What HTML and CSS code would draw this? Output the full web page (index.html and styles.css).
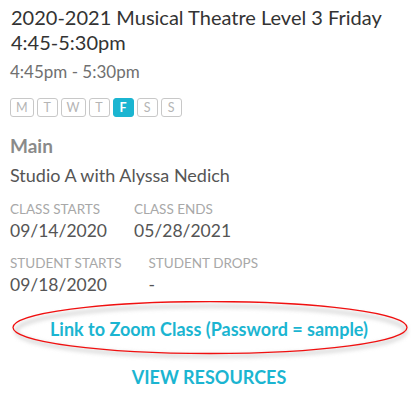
FILE: index.html
```html
<!DOCTYPE html>
<html lang="en">
<head>
    <meta charset="UTF-8" />
    <title>Class Details</title>
    <link rel="stylesheet" href="styles.css">
</head>
<body>
    <div class="class-card">
        <h1 class="class-title">2020-2021 Musical Theatre Level 3 Friday 4:45-5:30pm</h1>
        <div class="class-time">4:45pm - 5:30pm</div>

        <div class="days">
            <span class="day">M</span>
            <span class="day">T</span>
            <span class="day">W</span>
            <span class="day">T</span>
            <span class="day active">F</span>
            <span class="day">S</span>
            <span class="day">S</span>
        </div>

        <div class="location">Main</div>
        <div class="room">Studio A with Alyssa Nedich</div>

        <div class="dates first">
            <div class="date-col">
                <div class="date-label">CLASS STARTS</div>
                <div class="date-value">09/14/2020</div>
            </div>
            <div class="date-col">
                <div class="date-label">CLASS ENDS</div>
                <div class="date-value">05/28/2021</div>
            </div>
        </div>
        <div class="dates">
            <div class="date-col">
                <div class="date-label">STUDENT STARTS</div>
                <div class="date-value">09/18/2020</div>
            </div>
            <div class="date-col">
                <div class="date-label">STUDENT DROPS</div>
                <div class="date-value">-</div>
            </div>
        </div>

        <div class="zoom-link">
            <a href="#">Link to Zoom Class (Password = sample)</a>
            <!-- hand-drawn circle around the link -->
            <svg class="circled" width="400" height="62" viewBox="0 0 400 62">
                <defs>
                    <filter id="soft" x="-10%" y="-30%" width="120%" height="160%">
                        <feGaussianBlur stdDeviation="2" />
                    </filter>
                </defs>
                <ellipse cx="200" cy="30" rx="195" ry="25" fill="none" stroke="#d0d0d0" stroke-width="3" filter="url(#soft)" />
                <ellipse cx="199" cy="26.5" rx="197" ry="26" fill="none" stroke="#f01010" stroke-width="1.3" />
            </svg>
        </div>

        <div class="resources">
            <a href="#">VIEW RESOURCES</a>
        </div>
    </div>
</body>
</html>
```

FILE: styles.css
```css
* {
    box-sizing: border-box;
    margin: 0;
    padding: 0;
}

body {
    background: #fff;
    font-family: Lato, 'Open Sans', sans-serif;
    color: #555;
}

.class-card {
    width: 418px;
    padding: 5px 10px 0 10px;
}

.class-title {
    font-size: 20px;
    font-weight: normal;
    line-height: 25px;
    color: #333;
    padding-left: 1px;
    padding-right: 14px;
}

.class-time {
    margin-top: 7px;
    font-size: 17px;
    color: #707070;
    line-height: 20px;
}

.days {
    display: flex;
    gap: 3px;
    margin-top: 16px;
}

.day {
    display: inline-flex;
    align-items: center;
    justify-content: center;
    min-width: 21px;
    height: 19px;
    padding: 0 5px;
    border: 1px solid #c8c8c8;
    border-radius: 3px;
    font-size: 12.5px;
    color: #b5b5b5;
}

.day.active {
    background: #1bb5d1;
    border-color: #1bb5d1;
    color: #fff;
    font-weight: bold;
}

.location {
    margin-top: 17px;
    font-size: 19px;
    font-weight: bold;
    color: #8a8a8a;
    line-height: 23px;
}

.room {
    margin-top: 7px;
    font-size: 18px;
    color: #555;
    line-height: 22px;
}

.dates {
    display: flex;
    margin-top: 12px;
}

.dates.first {
    margin-top: 13px;
}

.date-col {
    margin-right: 27px;
}

.date-label {
    font-size: 13.5px;
    color: #a8a8a8;
    line-height: 21px;
}

.date-value {
    font-size: 17.5px;
    color: #555;
    line-height: 21px;
}

.zoom-link {
    position: relative;
    margin-top: 6px;
    padding: 17px 0 14px;
    text-align: center;
    line-height: 22px;
}

.zoom-link a,
.resources a {
    color: #1bb5d1;
    font-weight: bold;
    text-decoration: none;
}

.zoom-link a {
    font-size: 18px;
}

.circled {
    position: absolute;
    left: 1px;
    top: 0;
    pointer-events: none;
}

.resources {
    margin-top: 11px;
    text-align: center;
    font-size: 18px;
    line-height: 22px;
}
```
